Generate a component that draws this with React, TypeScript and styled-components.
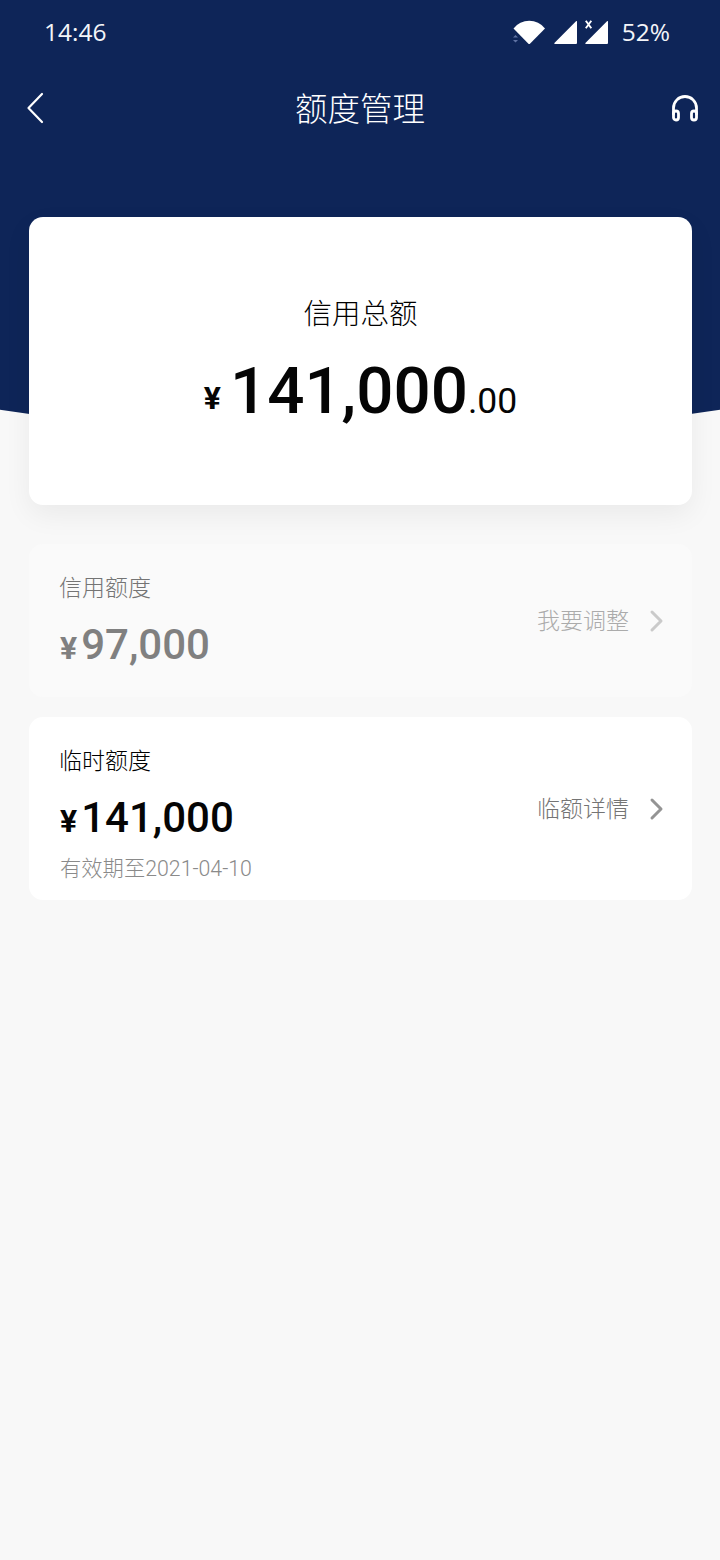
import React from 'react';
import styled, { createGlobalStyle } from 'styled-components';

const GlobalStyle = createGlobalStyle`
  html, body {
    margin: 0;
    padding: 0;
    background: #f8f8f8;
  }
  * {
    box-sizing: border-box;
  }
`;

const Page = styled.div`
  width: 720px;
  height: 1560px;
  overflow: hidden;
  background: #f8f8f8;
  font-family: Roboto, "Noto Sans CJK SC", sans-serif;
`;

const Hero = styled.header`
  height: 436px;
  margin-bottom: -219px;
  background: #0e2558;
  color: #fff;
  clip-path: ellipse(1055px 436px at 50% 0);
`;

const StatusBar = styled.div`
  height: 66px;
  display: flex;
  align-items: center;
  padding: 0 50px 0 44px;
`;

const StatusText = styled.span`
  font-family: "Open Sans", sans-serif;
  font-size: 24.5px;
  line-height: 64px;
  height: 64px;
  margin-bottom: 2px;
  color: #f4f5f8;
`;

const StatusIcons = styled.div`
  margin-left: auto;
  display: flex;
  align-items: center;
  gap: 13px;
`;

const StatusSvg = styled.svg`
  display: block;
  width: 96px;
  height: 28px;
`;

const NavBar = styled.nav`
  height: 84px;
  display: flex;
  align-items: center;
  justify-content: space-between;
  padding: 0 21px;
`;

const NavTitle = styled.h1`
  margin: 0 0 2px;
  font-family: "Noto Sans CJK SC", sans-serif;
  font-size: 32.5px;
  font-weight: 300;
  line-height: 82px;
  color: #fff;
`;

const NavIcon = styled.svg`
  display: block;
  width: 28px;
  height: 32px;
  fill: none;
  stroke: #fff;
  stroke-linecap: round;
  stroke-linejoin: round;
`;

const Content = styled.main`
  position: relative;
  display: flex;
  flex-direction: column;
  padding: 0 28px 0 29px;
`;

const TotalCard = styled.section`
  height: 288px;
  margin-bottom: 39px;
  display: flex;
  flex-direction: column;
  align-items: center;
  padding-top: 74px;
  background: #fff;
  border-radius: 14px;
  box-shadow: 0 10px 28px rgba(0, 0, 0, 0.06);
`;

const TotalLabel = styled.div`
  font-family: "Noto Sans CJK SC", sans-serif;
  font-size: 28.5px;
  font-weight: 300;
  line-height: 42px;
  color: #000;
`;

const TotalAmount = styled.div`
  display: flex;
  align-items: baseline;
  margin-top: 18px;
  color: #050505;
  line-height: 80px;
`;

const TotalYen = styled.span`
  font-size: 32px;
  font-weight: 700;
  margin-right: 9px;
  transform: translateY(-4px);
`;

const TotalWhole = styled.span`
  font-size: 65.5px;
  font-weight: 500;
`;

const TotalCents = styled.span`
  font-size: 35.5px;
`;

const LimitCard = styled.section<{ $muted?: boolean; $height: number }>`
  height: ${p => p.$height}px;
  margin-bottom: 20px;
  padding: 25px 28px 0 31px;
  display: flex;
  justify-content: space-between;
  align-items: flex-start;
  border-radius: 14px;
  background: ${p => (p.$muted ? '#fafafa' : '#fff')};
`;

const LimitInfo = styled.div`
  display: flex;
  flex-direction: column;
`;

const LimitLabel = styled.div<{ $muted?: boolean }>`
  margin-left: -1px;
  font-family: "Noto Sans CJK SC", sans-serif;
  font-size: 23px;
  font-weight: 300;
  line-height: 34px;
  color: ${p => (p.$muted ? '#747474' : '#000')};
`;

const LimitAmount = styled.div<{ $muted?: boolean }>`
  display: flex;
  align-items: baseline;
  margin-top: 13px;
  font-size: 42px;
  font-weight: 500;
  line-height: 58px;
  color: ${p => (p.$muted ? '#808080' : '#050505')};
`;

const LimitYen = styled.span`
  font-size: 32px;
  font-weight: 700;
  margin-right: 4px;
`;

const LimitNote = styled.div`
  margin-top: 3px;
  font-size: 21.3px;
  font-weight: 300;
  line-height: 32px;
  color: #8a8a8a;
`;

const LimitAction = styled.div<{ $muted?: boolean; $top: number }>`
  display: flex;
  align-items: center;
  gap: 19px;
  margin-top: ${p => p.$top}px;
  font-family: "Noto Sans CJK SC", sans-serif;
  font-size: 23px;
  font-weight: 300;
  line-height: 34px;
  color: ${p => (p.$muted ? '#ababab' : '#747474')};
`;

const Chevron = styled.svg<{ $muted?: boolean }>`
  display: block;
  width: 16px;
  height: 24px;
  margin-top: 3px;
  fill: none;
  stroke: ${p => (p.$muted ? '#cacaca' : '#949494')};
  stroke-width: 3;
  stroke-linecap: round;
  stroke-linejoin: round;
`;

const ChevronRight = ({ muted }: { muted?: boolean }) => (
  <Chevron $muted={muted} viewBox="0 0 16 24">
    <path d="M4 3l9 9-9 9" />
  </Chevron>
);

const StatusGlyphs = () => (
  <StatusSvg viewBox="0 2 96 28">
    {/* wifi wedge with the small data arrows */}
    <path d="M.5 11.500A20 20 0 0 1 32 11.500L17.200 26.500Q16.200 27.500 15.200 26.500z" fill="#fff" />
    <path d="M0 20.500l2.500-2.500 2.500 2.500zM0 23l2.500 2.500 2.500-2.500z" fill="#5f73a3" />
    {/* signal bars */}
    <path d="M64 4.500v21.500a1 1 0 0 1-1 1H41.800a.6.6 0 0 1-.4-1L63 4.200a.6.6 0 0 1 1 .3z" fill="#fff" />
    <path d="M95 4.500v21.500a1 1 0 0 1-1 1H72.800a.6.6 0 0 1-.4-1L94 4.200a.6.6 0 0 1 1 .3z" fill="#fff" />
    <path d="M72.800 3.800l5.500 7.500m0-7.500l-5.500 7.500" stroke="#fff" strokeWidth="1.900" fill="none" />
  </StatusSvg>
);

export default function App() {
  return (
    <Page>
      <GlobalStyle />
      <Hero>
        <StatusBar>
          <StatusText>14:46</StatusText>
          <StatusIcons>
            <StatusGlyphs />
            <StatusText>52%</StatusText>
          </StatusIcons>
        </StatusBar>
        <NavBar>
          <NavIcon viewBox="0 0 28 32" strokeWidth="2.200">
            <path d="M21 2L7.500 16 21 30" />
          </NavIcon>
          <NavTitle>额度管理</NavTitle>
          <NavIcon viewBox="0 0 28 32" strokeWidth="2.800">
            <path d="M2.500 22V16a11.500 11.500 0 0 1 23 0v6" />
            <rect x="2.500" y="19" width="5" height="9" rx="2.500" />
            <rect x="20.500" y="19" width="5" height="9" rx="2.500" />
          </NavIcon>
        </NavBar>
      </Hero>
      <Content>
        <TotalCard>
          <TotalLabel>信用总额</TotalLabel>
          <TotalAmount>
            <TotalYen>¥</TotalYen>
            <TotalWhole>141,000</TotalWhole>
            <TotalCents>.00</TotalCents>
          </TotalAmount>
        </TotalCard>
        <LimitCard $muted $height={153}>
          <LimitInfo>
            <LimitLabel $muted>信用额度</LimitLabel>
            <LimitAmount $muted>
              <LimitYen>¥</LimitYen>97,000
            </LimitAmount>
          </LimitInfo>
          <LimitAction $muted $top={33}>
            我要调整
            <ChevronRight muted />
          </LimitAction>
        </LimitCard>
        <LimitCard $height={183}>
          <LimitInfo>
            <LimitLabel>临时额度</LimitLabel>
            <LimitAmount>
              <LimitYen>¥</LimitYen>141,000
            </LimitAmount>
            <LimitNote>有效期至2021-04-10</LimitNote>
          </LimitInfo>
          <LimitAction $top={48}>
            临额详情
            <ChevronRight />
          </LimitAction>
        </LimitCard>
      </Content>
    </Page>
  );
}
